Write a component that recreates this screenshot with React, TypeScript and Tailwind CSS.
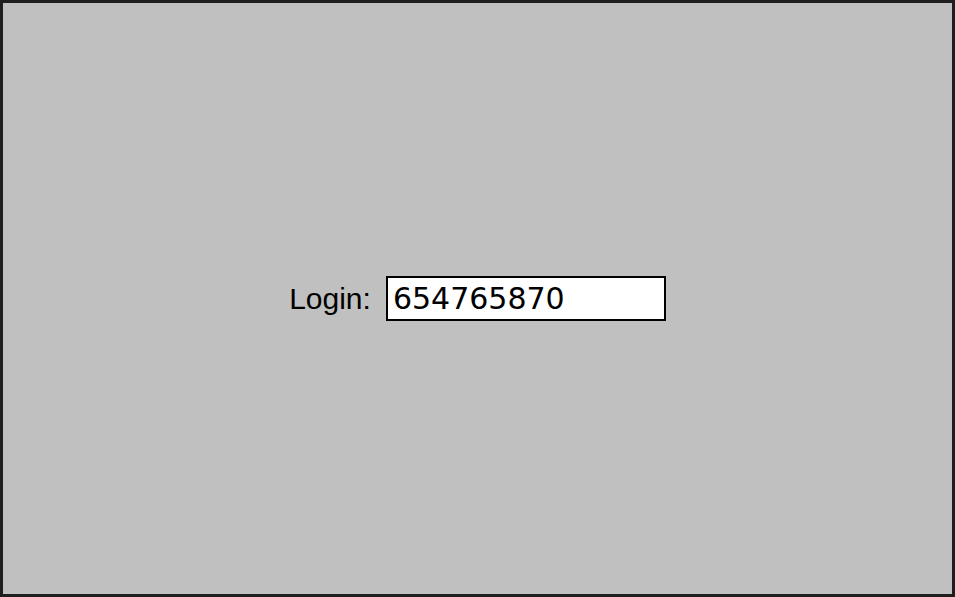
export default function App() {
  return (
    <div className="flex h-[597px] w-[955px] items-center justify-center border-[3px] border-[#1e1e1e] bg-[#c0c0c0]">
      <div className="flex items-center gap-[15px]">
        <label className="font-['Liberation_Sans',sans-serif] text-[30px] leading-none text-black">
          Login:
        </label>
        <div className="flex h-[45px] w-[280px] items-center border-2 border-black bg-white pl-[5px]">
          <span className="font-['DejaVu_Sans',sans-serif] text-[30px] leading-none text-black">
            654765870
          </span>
        </div>
      </div>
    </div>
  );
}
